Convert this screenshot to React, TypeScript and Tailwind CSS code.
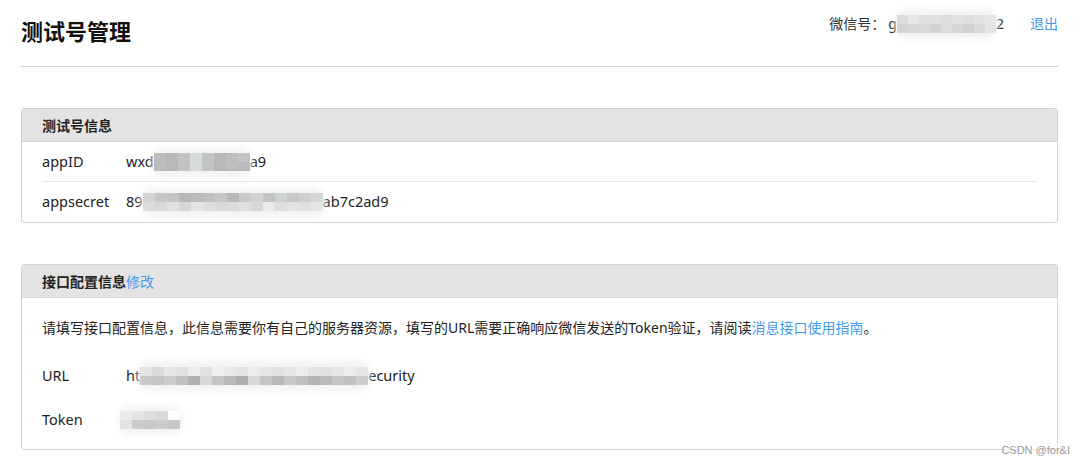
const FONT = "font-['Noto_Sans','Noto_Sans_CJK_SC',sans-serif]";

// pixelated blur blocks that hide private values
function Mosaic({ top, bottom, cell = 12 }: { top: string[]; bottom: string[]; cell?: number }) {
  return (
    <span className="relative inline-flex flex-col align-middle">
      <span className="absolute -inset-x-[2px] -inset-y-[6px] rounded-[12px] bg-[#f3f3f3] blur-[3px]" />
      <span className="relative flex">
        {top.map((c, i) => (
          <span key={i} className="h-[9px]" style={{ width: cell, background: c }} />
        ))}
      </span>
      <span className="relative flex">
        {bottom.map((c, i) => (
          <span key={i} className="h-[9px]" style={{ width: cell, background: c }} />
        ))}
      </span>
    </span>
  );
}

function InfoRow({ label, children, last }: { label: string; children: React.ReactNode; last?: boolean }) {
  return (
    <div className={`flex items-center h-[40px] ${last ? "" : "border-b border-[#e6e6e6]"}`}>
      <span className="w-[84px] shrink-0">{label}</span>
      <span className="flex items-center">{children}</span>
    </div>
  );
}

export default function App() {
  return (
    <div className={`relative w-[1085px] h-[465px] bg-white text-[#222] ${FONT} overflow-hidden`}>
      <div className="ml-[21px] w-[1037px]">

        {/* HEADER */}
        <div className="flex items-start justify-between h-[67px] border-b border-[#d5d5d5]">
          <h1 className="pt-[15px] text-[22px] leading-[32px] font-bold text-[#111]">测试号管理</h1>
          <div className="flex items-center pt-[14px] text-[14px] leading-[20px]">
            <span className="text-[#333]">微信号：</span>
            <span className="ml-[3px]">g</span>
            <Mosaic
              cell={11}
              top={["#dcdcdc", "#e6e6e6", "#dedede", "#e0e0e0", "#dcdcdc", "#e2e2e2", "#dedede", "#e2e2e2", "#e6e6e6"]}
              bottom={["#d4d4d4", "#d6d6d6", "#dadada", "#d2d2d2", "#dcdcdc", "#d6d6d6", "#d0d0d0", "#dadada", "#e4e4e4"]}
            />
            <span>2</span>
            <a className="ml-[26px] text-[#459ae9]">退出</a>
          </div>
        </div>

        {/* 测试号信息 */}
        <section className="mt-[41px] border border-[#d3d3d3] rounded-[3px] overflow-hidden text-[14.5px]">
          <div className="h-[33px] flex items-center px-[20px] bg-[#e3e3e3] border-b border-[#d3d3d3] text-[14px] font-bold text-[#222]">
            测试号信息
          </div>
          <div className="px-[20px]">
            <InfoRow label="appID">
              wxd
              <Mosaic
                top={["#bdbdbd", "#b8b8b8", "#c2c2c2", "#d6dada", "#c4c4c4", "#b8b8b8", "#bebebe", "#c4c4c4"]}
                bottom={["#bdbdbd", "#b8b8b8", "#c2c2c2", "#d6dada", "#c4c4c4", "#b8b8b8", "#bebebe", "#b8bcc0"]}
              />
              a9
            </InfoRow>
            <InfoRow label="appsecret" last>
              89
              <Mosaic
                top={["#d4d4d4", "#c8c8c8", "#c4c4c4", "#b8b8b8", "#bcbcbc", "#c0c0c0", "#c6c6c6", "#b8b8b8", "#c8c8c8", "#d2d2d2", "#c4c4c4", "#cdd2d2", "#c8c8c8", "#d0d0d0", "#d6d6d6"]}
                bottom={["#dcdcdc", "#d8d8d8", "#e0e0e0", "#d6d6d6", "#e4e4e4", "#dedede", "#d8d8d8", "#dcdcdc", "#e0e0e0", "#d8d8d8", "#eaeaea", "#dedede", "#e4e4e4", "#e0e0e0", "#e6e6e6"]}
              />
              ab7c2ad9
            </InfoRow>
          </div>
        </section>

        {/* 接口配置信息 */}
        <section className="mt-[41px] border border-[#d3d3d3] rounded-[3px] overflow-hidden text-[14.5px]">
          <div className="h-[33px] flex items-center px-[20px] bg-[#e3e3e3] border-b border-[#d3d3d3] text-[14px] font-bold text-[#222]">
            接口配置信息<a className="font-normal text-[#459ae9]">修改</a>
          </div>
          <div className="px-[20px] pt-[20px] pb-[7px]">
            <p className="leading-[20px] text-[14px]">
              请填写接口配置信息，此信息需要你有自己的服务器资源，填写的URL需要正确响应微信发送的Token验证，请阅读
              <a className="text-[#459ae9]">消息接口使用指南</a>。
            </p>
            <div className="mt-[16px] flex items-center h-[44px]">
              <span className="w-[84px] shrink-0">URL</span>
              ht
              <Mosaic
                top={["#e4e4e4", "#dadada", "#e6e6e6", "#e0e0e0", "#ececec", "#e0e0e0", "#f0f0f0", "#e8e8e8", "#e4e4e4", "#ececec", "#e6e6e6", "#e0e0e0", "#e6e6e6", "#ececec", "#e4e4e4", "#e0e0e0", "#e6e6e6", "#ececec", "#e6e6e6"]}
                bottom={["#c8c8c8", "#c4c4c4", "#cccccc", "#c0c0c0", "#b0b0b0", "#d8d8d8", "#c4c4c4", "#b8b8b8", "#aeaeae", "#d8d8d8", "#c4c4c4", "#b8b8b8", "#c8c8c8", "#c0c0c0", "#b4b4b4", "#bcbcbc", "#c8c4c4", "#c0c0c0", "#cccccc"]}
              />
              ecurity
            </div>
            <div className="flex items-center h-[44px]">
              <span className="w-[78px] shrink-0">Token</span>
              <Mosaic
                top={["#ececec", "#e4e4e4", "#e0dcdc", "#d8d8d8", "#ffffff"]}
                bottom={["#e4e4e4", "#cccccc", "#c8c8c8", "#cccccc", "#c8c8c8"]}
              />
            </div>
          </div>
        </section>
      </div>

      {/* watermark */}
      <span className="absolute right-[15px] top-[443px] text-[11px] leading-[14px] text-[#9a9a9a] bg-white/60 font-['Liberation_Sans',sans-serif]">
        CSDN @for&amp;I
      </span>
    </div>
  );
}
